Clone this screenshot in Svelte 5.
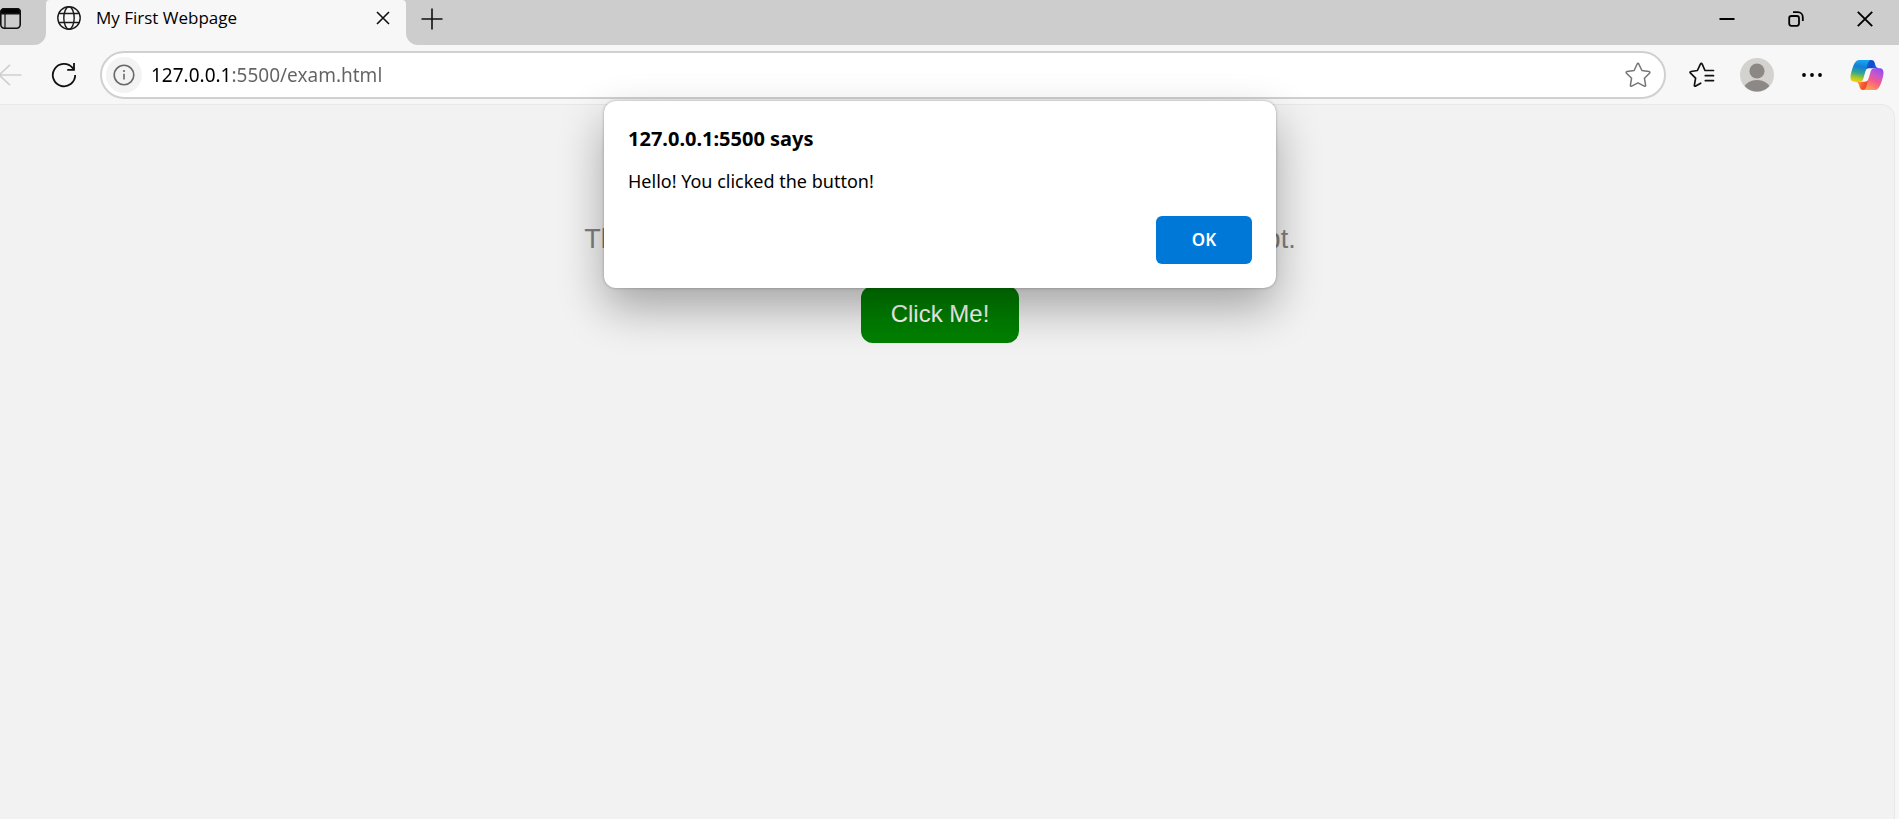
<script>
  let open = $state(true);
  let address = $state('127.0.0.1:5500/exam.html');
</script>

<div class="browser">
  <header class="tabstrip">
    <div class="strip-start">
      <button class="icon tab-actions" aria-label="Tab actions">
        <svg width="22" height="22" viewBox="0 0 22 22" fill="none" stroke="#111" stroke-width="1.6">
          <rect x="0.8" y="0.8" width="19.4" height="19.4" rx="3.6" />
          <path d="M0.8 5.6V4A3.2 3.2 0 0 1 4 0.8h13A3.2 3.2 0 0 1 20.200 4v1.600z" fill="#000" />
          <path d="M5 5v15" stroke-width="1.2" />
        </svg>
      </button>
    </div>
    <div class="tab-slot">
      <div class="tab">
        <svg width="24" height="24" viewBox="0 0 24 24" fill="none" stroke="#1b1b1b" stroke-width="1.4">
          <circle cx="12" cy="12" r="11.2" />
          <ellipse cx="12" cy="12" rx="5.2" ry="11.2" />
          <path d="M1.800 7.500h20.400M1.800 16.500h20.400" />
        </svg>
        <span class="tab-title">My First Webpage</span>
        <button class="icon tab-close" aria-label="Close tab">
          <svg width="14" height="14" viewBox="0 0 14 14" stroke="#111" stroke-width="1.6"><path d="M1 1l12 12M13 1L1 13" /></svg>
        </button>
      </div>
    </div>
    <div class="strip-end">
      <button class="icon new-tab" aria-label="New tab">
        <svg width="22" height="22" viewBox="0 0 22 22" stroke="#111" stroke-width="1.6"><path d="M11 0.500v21M0.500 11h21" /></svg>
      </button>
      <div class="window-controls">
        <button class="icon" aria-label="Minimize">
          <svg width="16" height="16" viewBox="0 0 16 16" stroke="#000" stroke-width="2"><path d="M0.500 8h15" /></svg>
        </button>
        <button class="icon" aria-label="Restore">
          <svg width="16" height="16" viewBox="0 0 16 16" fill="none" stroke="#000" stroke-width="1.8">
            <rect x="1.200" y="5" width="9.800" height="9.800" rx="2.200" />
            <path d="M5 1.200h4.800a5 5 0 0 1 5 5V10" />
          </svg>
        </button>
        <button class="icon" aria-label="Close">
          <svg width="16" height="16" viewBox="0 0 16 16" stroke="#000" stroke-width="1.9"><path d="M0.800 0.800l14.400 14.400M15.200 0.800L0.800 15.200" /></svg>
        </button>
      </div>
    </div>
  </header>

  <nav class="toolbar">
    <button class="icon back" aria-label="Back" disabled>
      <svg width="22" height="22" viewBox="2 0 22 22" fill="none" stroke="#cfcfcf" stroke-width="1.6"><path d="M23.500 11H1M12 0.800L1 11l11 10.200" /></svg>
    </button>
    <button class="icon reload" aria-label="Refresh">
      <svg width="26" height="26" viewBox="0 0 26 26" fill="none" stroke="#111" stroke-width="1.8">
        <path d="M24.200 13A11.200 11.200 0 1 1 21.600 5.900l1.200 1.400" />
        <path d="M23 1v6.800h-6.800" />
      </svg>
    </button>
    <div class="address">
      <button class="icon site-info" aria-label="View site information">
        <svg width="22" height="22" viewBox="0 0 22 22" fill="none" stroke="#696969" stroke-width="1.6">
          <circle cx="11" cy="11" r="9.800" />
          <path d="M11 9.800v5.700" />
          <circle cx="11" cy="7" r="1.100" fill="#696969" stroke="none" />
        </svg>
      </button>
      <input aria-label="Address" bind:value={address} spellcheck="false" />
      <button class="icon favorite" aria-label="Add to favorites">
        <svg width="26" height="26" viewBox="0 0 26 26" fill="none" stroke="#757575" stroke-width="1.5" stroke-linejoin="round">
          <path d="M12.100 2.200q.9-1.700 1.800 0L16.900 8.500l7 1q1.700.4.600 1.700l-5.100 5 1.200 7q.2 1.500-1.300.9L13 20.800l-6.300 3.300q-1.500.6-1.300-.9l1.200-7-5.100-5q-1.100-1.300.6-1.700l7-1z" />
        </svg>
      </button>
    </div>
    <div class="tools">
      <button class="icon" aria-label="Favorites">
        <svg width="26" height="26" viewBox="0 0 26 26" fill="none" stroke="#111" stroke-width="1.7" stroke-linejoin="round" stroke-linecap="round">
          <path d="M11.700 21.200L6.700 24.100q-1.500.6-1.300-.9l1.200-7-5.100-5q-1.100-1.300.6-1.700l6.300-1L11.400 2.200q.9-1.700 1.800 0L16 8.500l8.500 0M16.300 13.700h8.200M16.300 18.600h8.200" />
        </svg>
      </button>
      <button class="icon" aria-label="Profile">
        <svg width="34" height="34" viewBox="0 0 34 34">
          <defs><clipPath id="avatar"><circle cx="17" cy="17" r="16.500" /></clipPath></defs>
          <circle cx="17" cy="17" r="17" fill="#d4d2cf" />
          <g clip-path="url(#avatar)" fill="#8b8886">
            <circle cx="17" cy="13" r="7.600" />
            <ellipse cx="17" cy="32" rx="13.500" ry="10" />
          </g>
        </svg>
      </button>
      <button class="icon" aria-label="Settings and more">
        <svg width="20" height="6" viewBox="0 0 20 6"><circle cx="2" cy="3" r="1.900" /><circle cx="10" cy="3" r="1.900" /><circle cx="18" cy="3" r="1.900" /></svg>
      </button>
      <button class="icon" aria-label="Copilot">
        <svg width="36" height="36" viewBox="0 0 48 48">
          <defs>
            <linearGradient id="fold-top" x1="38" y1="14" x2="24" y2="8" gradientUnits="userSpaceOnUse"><stop stop-color="#0a7ae6" /><stop offset="0.500" stop-color="#1748cc" /><stop offset="1" stop-color="#0a5fd8" /></linearGradient>
            <linearGradient id="fold-bottom" x1="10" y1="34" x2="25" y2="40" gradientUnits="userSpaceOnUse"><stop stop-color="#ffb03a" /><stop offset="0.500" stop-color="#f8612e" /><stop offset="1" stop-color="#e53a2c" /></linearGradient>
            <linearGradient id="ribbon-left" x1="15" y1="4" x2="10" y2="33" gradientUnits="userSpaceOnUse"><stop stop-color="#18a5ee" /><stop offset="0.300" stop-color="#147ed8" /><stop offset="0.600" stop-color="#35a98c" /><stop offset="0.820" stop-color="#aac926" /><stop offset="1" stop-color="#f7cf0c" /></linearGradient>
            <linearGradient id="ribbon-right" x1="42" y1="15" x2="28" y2="44" gradientUnits="userSpaceOnUse"><stop stop-color="#8b4df5" /><stop offset="0.300" stop-color="#c356d2" /><stop offset="0.600" stop-color="#f65a88" /><stop offset="1" stop-color="#ffa14d" /></linearGradient>
          </defs>
          <path fill="url(#fold-top)" d="M34.142 7.325A4.630 4.630 0 0 0 29.700 4H28.350a4.630 4.630 0 0 0-4.554 3.794L21.480 20.407l.575-1.965a4.630 4.630 0 0 1 4.444-3.330h7.853l3.294 1.282 3.175-1.283h-.926a4.630 4.630 0 0 1-4.443-3.325z" />
          <path fill="url(#fold-bottom)" d="M14.330 40.656A4.630 4.630 0 0 0 18.779 44h2.870a4.630 4.630 0 0 0 4.629-4.510l.312-12.163-.654 2.233a4.630 4.630 0 0 1-4.443 3.329h-7.919l-2.823-1.532-3.057 1.532h.912a4.630 4.630 0 0 1 4.447 3.344z" />
          <path fill="url(#ribbon-left)" d="M29.500 4H13.460c-4.583 0-7.332 6.057-9.165 12.113C2.123 23.290-.720 32.885 7.503 32.885h6.925a4.630 4.630 0 0 0 4.456-3.358a2078 2078 0 0 1 4.971-17.156c.843-2.843 1.544-5.284 2.621-6.805C27.080 4.714 28.086 4 29.500 4" />
          <path fill="url(#ribbon-right)" d="M18.498 44h16.040c4.582 0 7.332-6.058 9.165-12.115c2.171-7.177 5.013-16.775-3.208-16.775h-6.926a4.630 4.630 0 0 0-4.455 3.358a2084 2084 0 0 1-4.972 17.160c-.842 2.843-1.544 5.285-2.620 6.806c-.604.852-1.610 1.566-3.024 1.566" />
        </svg>
      </button>
    </div>
  </nav>

  <main class="page">
    <p>This is a simple webpage with HTML, CSS, and JavaScript.</p>
    <button class="click-me" onclick={() => (open = true)}>Click Me!</button>
    {#if open}
      <div class="dialog" role="alertdialog" aria-labelledby="dialog-title" aria-describedby="dialog-message">
        <h2 id="dialog-title">127.0.0.1:5500 says</h2>
        <p id="dialog-message">Hello! You clicked the button!</p>
        <button class="ok" onclick={() => (open = false)}>OK</button>
      </div>
    {/if}
  </main>
</div>

<style>
  :global(body) {
    margin: 0;
  }
  .browser {
    display: flex;
    flex-direction: column;
    min-height: 100vh;
    background: #f7f7f7;
    font-family: 'Noto Sans', 'Open Sans', sans-serif;
    color: #000;
    overflow-x: hidden;
  }
  .browser * {
    box-sizing: border-box;
  }
  button {
    border: 0;
    padding: 0;
    font-family: inherit;
  }
  .icon {
    display: flex;
    align-items: center;
    justify-content: center;
    flex: none;
    background: transparent;
  }
  svg {
    display: block;
    flex: none;
  }

  .tabstrip {
    display: flex;
    height: 45px;
  }
  .strip-start,
  .strip-end {
    display: flex;
    align-items: center;
    padding-bottom: 8px;
    background: #cdcdcd;
  }
  .strip-start {
    width: 46px;
    border-bottom-right-radius: 12px;
  }
  .strip-end {
    flex: 1;
    justify-content: space-between;
    padding-left: 15px;
    border-bottom-left-radius: 12px;
  }
  .tab-slot {
    width: 360px;
    background: linear-gradient(#cdcdcd 4px, #f7f7f7 4px);
  }
  .tab {
    display: flex;
    align-items: center;
    height: 100%;
    padding: 0 16px 9px 11px;
    border-radius: 4px 4px 0 0;
    background: #f7f7f7;
  }
  .tab-title {
    flex: 1;
    margin-left: 15px;
    font-family: 'Open Sans', 'Noto Sans', sans-serif;
    font-size: 17px;
    line-height: 24px;
    white-space: nowrap;
  }
  .window-controls {
    display: flex;
  }
  .window-controls .icon {
    width: 69px;
    height: 37px;
  }

  .toolbar {
    display: flex;
    align-items: center;
    height: 59px;
    padding-right: 5px;
  }
  .back {
    width: 46px;
    height: 36px;
    justify-content: flex-start;
  }
  .reload {
    width: 36px;
    height: 36px;
  }
  .address {
    display: flex;
    align-items: center;
    flex: 1;
    height: 48px;
    margin: 0 8px 0 18px;
    padding: 0 13px 0 4px;
    border: 2px solid #d0d0d0;
    border-radius: 24px;
    background: #fff;
  }
  .site-info {
    width: 36px;
    height: 36px;
    border-radius: 50%;
    background: #f3f3f3;
  }
  .address input {
    flex: 1;
    min-width: 0;
    height: 32px;
    margin-left: 9px;
    padding: 0;
    border: 0;
    outline: 0;
    font-family: inherit;
    font-size: 19px;
    background: linear-gradient(90deg, #000 80px, #636363 80px);
    background-clip: text;
    -webkit-background-clip: text;
    -webkit-text-fill-color: transparent;
  }
  .tools {
    display: flex;
  }
  .tools .icon {
    width: 55px;
    height: 40px;
  }

  .page {
    position: relative;
    flex: 1;
    display: flex;
    flex-direction: column;
    align-items: center;
    gap: 31px;
    margin-right: 4px;
    padding: 119px 14px 0 0;
    border: solid #e8e8e8;
    border-width: 1px 1px 0 0;
    border-top-right-radius: 14px;
    background: #f2f2f2;
    font-family: 'Liberation Sans', Arial, sans-serif;
  }
  .page > p {
    margin: 0;
    font-size: 27px;
    line-height: 31px;
    color: #808080;
  }
  .click-me {
    padding: 14px 30px 16px;
    border-radius: 12px;
    background: #008000;
    color: #fff;
    font-size: 24px;
    line-height: 27px;
  }
  .dialog {
    position: absolute;
    top: -4px;
    left: calc(50% - 7px);
    transform: translateX(-50%);
    display: flex;
    flex-direction: column;
    width: 672px;
    max-width: 90%;
    padding: 24px;
    border-radius: 12px;
    background: #fff;
    box-shadow:
      0 0 3px rgba(0, 0, 0, 0.3),
      0 20px 46px rgba(0, 0, 0, 0.32);
    font-family: 'Noto Sans', 'Open Sans', sans-serif;
  }
  .dialog h2 {
    margin: 0 0 14px;
    font-size: 20px;
    line-height: 28px;
    font-weight: 700;
  }
  .dialog p {
    margin: 0 0 21px;
    font-size: 18px;
    line-height: 28px;
  }
  .ok {
    align-self: flex-end;
    width: 96px;
    height: 48px;
    padding-bottom: 2px;
    border-radius: 6px;
    background: #0078d7;
    color: #fff;
    font-size: 17px;
    font-weight: 600;
  }
</style>
